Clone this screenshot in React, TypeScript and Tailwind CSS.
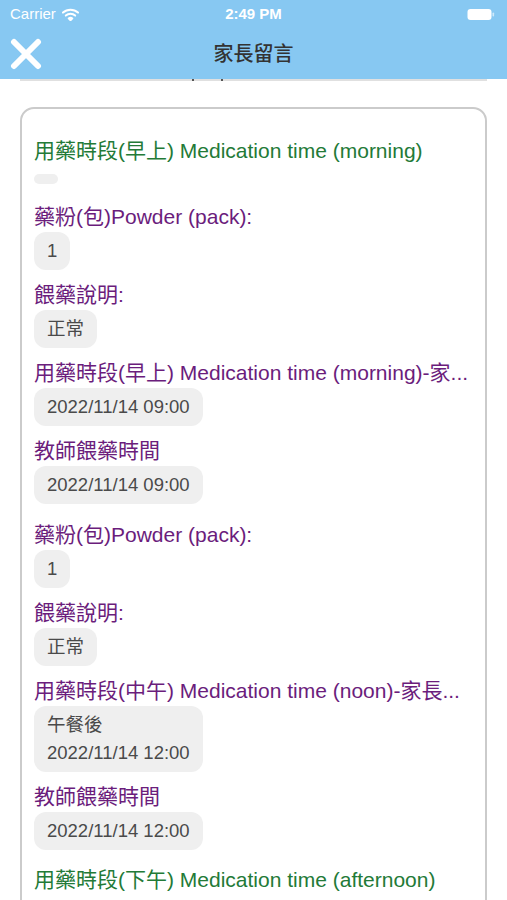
import React from "react";

const FONT = "font-['Liberation_Sans','Noto_Sans_CJK_TC',sans-serif]";

function Label({ text, className }: { text: string; className: string }) {
  return <div className={`whitespace-nowrap text-[21px] leading-[24px] ${className}`}>{text}</div>;
}

function Pill({ lines }: { lines: string[] }) {
  return (
    <div className="mt-[3px] self-start rounded-[12px] bg-[#efefef] px-[13px] py-[5px] text-[18.5px] leading-[28px] text-[#4a4a4a]">
      {lines.map((l, i) => (
        <div key={i}>{l}</div>
      ))}
    </div>
  );
}

function Item({ label, lines }: { label: string; lines: string[] }) {
  return (
    <div className="flex flex-col">
      <Label text={label} className="mt-[13px] text-[#6b1d7c]" />
      <Pill lines={lines} />
    </div>
  );
}

export default function App() {
  return (
    <div className={`relative h-[900px] w-[507px] overflow-hidden bg-white ${FONT}`}>
      {/* Header */}
      <div className="h-[79px] bg-[#87c8f2]">
        <div className="flex h-[28px] items-center justify-between px-[10px] text-[15px] text-white">
          <div className="flex w-[120px] items-center gap-[6px]">
            <span>Carrier</span>
            <svg width="17" height="13" viewBox="0 0 17 13">
              <path d="M1 4.6 A11 11 0 0 1 16 4.6" stroke="white" strokeWidth="2" fill="none" strokeLinecap="round" />
              <path d="M3.8 7.6 A7 7 0 0 1 13.2 7.6" stroke="white" strokeWidth="2" fill="none" strokeLinecap="round" />
              <path d="M6.5 10.4 A3 3 0 0 1 10.5 10.4 L8.5 12.6 Z" fill="white" stroke="white" strokeWidth="1.5" strokeLinejoin="round" />
            </svg>
          </div>
          <div className="font-semibold">2:49 PM</div>
          <div className="flex w-[120px] justify-end pr-[2px]">
            <svg width="28" height="13" viewBox="0 0 28 13">
              <rect x="0.5" y="1" width="24" height="11" rx="3" fill="white" />
              <rect x="25.5" y="4.5" width="1.6" height="4" rx="0.8" fill="white" opacity="0.6" />
            </svg>
          </div>
        </div>
        <div className="relative flex h-[51px] items-center justify-center">
          <svg className="absolute left-[10px] top-[10px]" width="32" height="32" viewBox="0 0 32 32">
            <path d="M4 4 L28 28 M28 4 L4 28" stroke="white" strokeWidth="6" strokeLinecap="round" />
          </svg>
          <div className="text-[20px] font-medium text-[#333333]">家長留言</div>
        </div>
      </div>
      <div className="relative mx-[20px] h-[2px] bg-[#e0e0e0]">
        <div className="absolute left-[172px] top-0 h-[2px] w-[2px] bg-[#555555]" />
        <div className="absolute left-[201px] top-0 h-[2px] w-[2px] bg-[#555555]" />
      </div>

      {/* Card */}
      <div className="mx-[20px] mt-[26px] rounded-[14px] border-2 border-[#cbcbcb] px-[12px] pt-[30px] pb-[40px]">
        <Label text="用藥時段(早上) Medication time (morning)" className="text-[#237a37]" />
        <div className="mt-[11px] mb-[8px] h-[10px] w-[24px] rounded-[6px] bg-[#efefef]" />
        <Item label="藥粉(包)Powder (pack):" lines={["1"]} />
        <Item label="餵藥說明:" lines={["正常"]} />
        <Item label="用藥時段(早上) Medication time (morning)-家..." lines={["2022/11/14 09:00"]} />
        <Item label="教師餵藥時間" lines={["2022/11/14 09:00"]} />

        <div className="mt-[6px]">
          <Item label="藥粉(包)Powder (pack):" lines={["1"]} />
          <Item label="餵藥說明:" lines={["正常"]} />
          <Item label="用藥時段(中午) Medication time (noon)-家長..." lines={["午餐後", "2022/11/14 12:00"]} />
          <Item label="教師餵藥時間" lines={["2022/11/14 12:00"]} />
        </div>

        <Label text="用藥時段(下午) Medication time (afternoon)" className="mt-[18px] text-[#237a37]" />
      </div>
    </div>
  );
}
